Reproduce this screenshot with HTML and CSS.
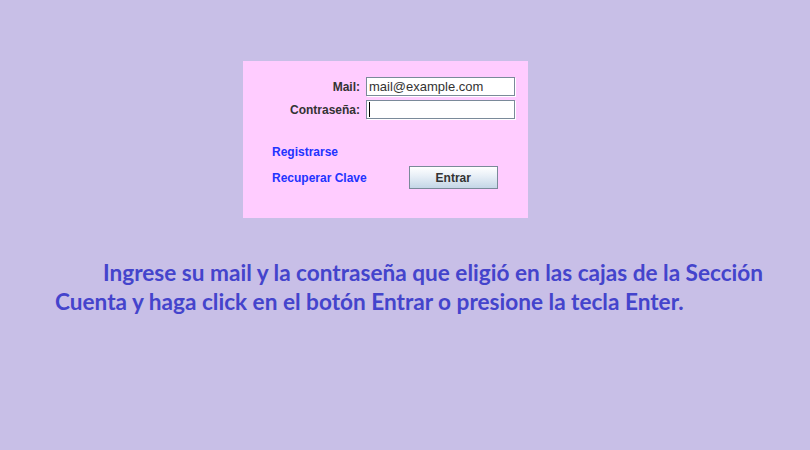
FILE: index.html
```html
<!DOCTYPE html>
<html>
<head>
<meta charset="utf-8">
<link rel="stylesheet" href="styles.css">
</head>
<body>
<div class="panel">
  <div class="row">
    <span class="label">Mail:</span>
    <div class="field">mail@example.com</div>
  </div>
  <div class="row">
    <span class="label">Contraseña:</span>
    <div class="field"><span class="caret"></span></div>
  </div>
  <div class="links">
    <a class="link">Registrarse</a>
    <div class="bottom">
      <a class="link">Recuperar Clave</a>
      <button class="btn">Entrar</button>
    </div>
  </div>
</div>
<p class="info">Ingrese su mail y la contraseña que eligió en las cajas de la Sección Cuenta y haga click en el botón Entrar o presione la tecla Enter.</p>
</body>
</html>
```
FILE: styles.css
```css
html, body {
  margin: 0;
  padding: 0;
  background: #c8bfe7;
  height: 100%;
}
.panel {
  margin: 61px 0 0 243px;
  width: 285px;
  height: 157px;
  background: #ffccff;
  box-sizing: border-box;
  padding-top: 16px;
  font-family: "Liberation Sans", Arial, sans-serif;
  font-size: 12px;
}
.row {
  display: flex;
  align-items: center;
  justify-content: flex-end;
  margin-right: 13px;
  margin-bottom: 4px;
}
.label {
  font-weight: bold;
  color: #333333;
  margin-right: 6px;
}
.field {
  width: 149px;
  height: 19px;
  box-sizing: border-box;
  border: 1px solid #7a8a99;
  box-shadow: 1px 1px 0 #ffffff;
  background: #fff;
  color: #333333;
  padding-left: 2px;
  line-height: 17px;
  font-size: 13px;
  display: flex;
  align-items: center;
}
.caret {
  display: block;
  width: 1px;
  height: 15px;
  background: #000;
}
.links {
  padding-left: 29px;
  margin-top: 26px;
}
.link {
  display: block;
  color: #2233ff;
  font-weight: bold;
  font-size: 12px;
}
.bottom {
  display: flex;
  align-items: center;
  margin-top: 7px;
}
.btn {
  margin-left: 42px;
  width: 89px;
  height: 23px;
  border: 1px solid #7a8a99;
  background: linear-gradient(#ffffff, #e6eef6 45%, #c4d6e6);
  font-family: "Liberation Sans", Arial, sans-serif;
  font-weight: bold;
  font-size: 12px;
  color: #333333;
  padding: 0;
}
.info {
  margin: 40px 0 0 55px;
  width: 720px;
  text-indent: 48px;
  font-family: Lato, "Open Sans", sans-serif;
  font-weight: bold;
  font-size: 22.6px;
  line-height: 29px;
  color: #4444cc;
}
```
